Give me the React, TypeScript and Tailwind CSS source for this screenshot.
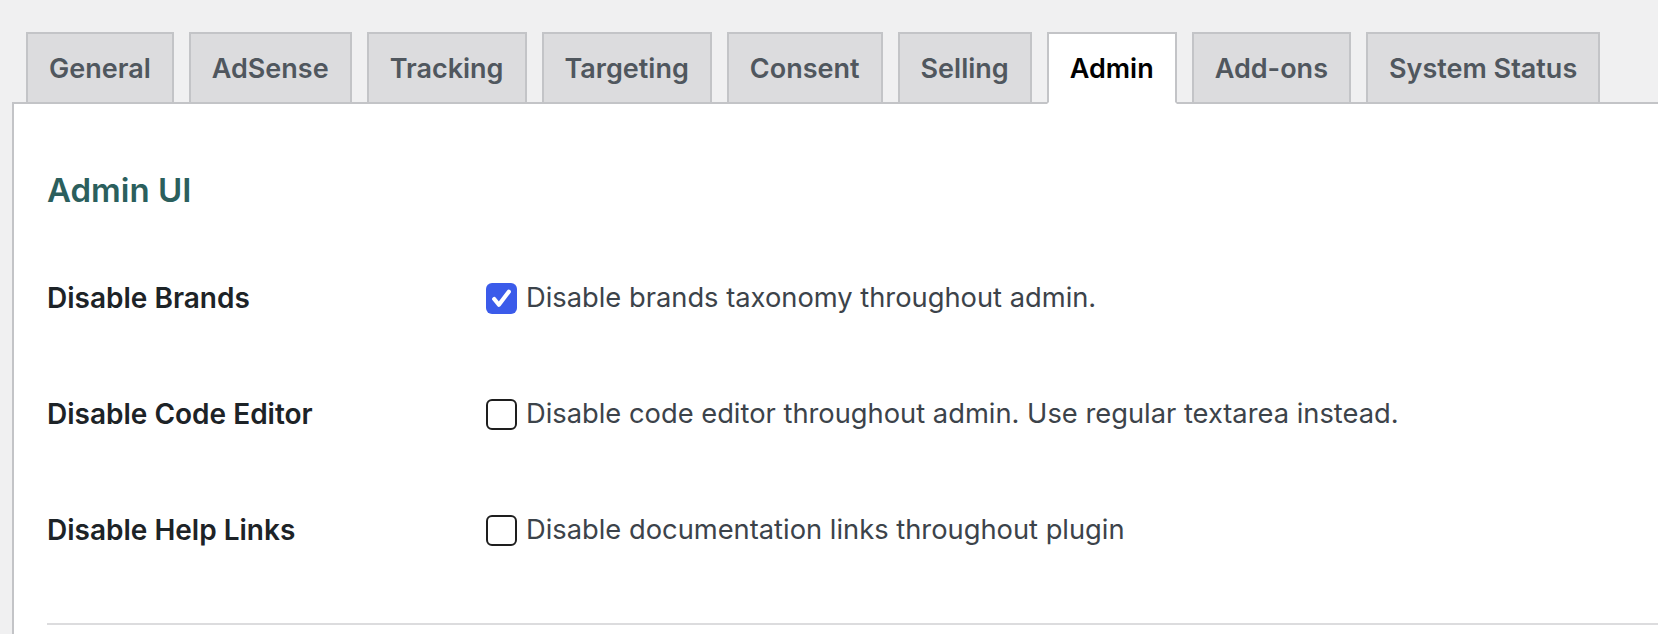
const tabs = [
  "General",
  "AdSense",
  "Tracking",
  "Targeting",
  "Consent",
  "Selling",
  "Admin",
  "Add-ons",
  "System Status",
];

const options = [
  {
    label: "Disable Brands",
    text: "Disable brands taxonomy throughout admin.",
    checked: true,
  },
  {
    label: "Disable Code Editor",
    text: "Disable code editor throughout admin. Use regular textarea instead.",
    checked: false,
  },
  {
    label: "Disable Help Links",
    text: "Disable documentation links throughout plugin",
    checked: false,
  },
];

function Checkbox({ checked }: { checked: boolean }) {
  if (checked) {
    return (
      <span className="flex h-[31px] w-[31px] shrink-0 items-center justify-center rounded-[6px] bg-[#3b5bea]">
        <svg width="25" height="25" viewBox="0 0 24 24" fill="none">
          <path
            d="M5 12.5l4.5 5.5 9.5-12.5"
            stroke="white"
            strokeWidth="4"
            strokeLinecap="round"
            strokeLinejoin="round"
          />
        </svg>
      </span>
    );
  }
  return (
    <span className="h-[31px] w-[31px] shrink-0 rounded-[6px] border-2 border-[#1e1e1e] bg-white" />
  );
}

export default function App() {
  return (
    <div className="min-h-screen bg-[#f0f0f1] pl-[12px] pt-[32px] font-['Inter','Liberation_Sans',sans-serif]">
      {/* tabs */}
      <nav className="relative z-10 flex gap-[15px] pl-[14px]">
        {tabs.map((tab) => {
          const active = tab === "Admin";
          return (
            <div
              key={tab}
              className={
                active
                  ? "-mb-[2px] h-[72px] border-2 border-b-white border-[#c3c4c7] bg-white px-[21px] pt-[2px] text-[27px] font-semibold leading-[66px] text-black"
                  : "-mb-[2px] h-[72px] border-2 border-[#c3c4c7] bg-[#dcdcde] px-[21px] pt-[2px] text-[27px] font-semibold leading-[66px] text-[#50575e]"
              }
            >
              {tab}
            </div>
          );
        })}
      </nav>

      {/* panel */}
      <div className="border-l-2 border-t-2 border-[#c3c4c7] bg-white pb-[40px] pl-[33px] pt-[62px]">
        <h2 className="text-[33px] font-semibold leading-[48px] text-[#2b5f5d]">
          Admin UI
        </h2>

        <div className="mt-[26px]">
          {options.map((o) => (
            <div key={o.label} className="flex h-[116px] items-center">
              <div className="w-[439px] shrink-0 text-[28px] font-semibold text-[#1d2327]">
                {o.label}
              </div>
              <div className="flex items-center gap-[9px]">
                <Checkbox checked={o.checked} />
                <span className="text-[27.3px] text-[#3c434a]">{o.text}</span>
              </div>
            </div>
          ))}
        </div>

        <div className="mt-[35px] h-[2px] bg-[#dcdcde]" />
      </div>
    </div>
  );
}
